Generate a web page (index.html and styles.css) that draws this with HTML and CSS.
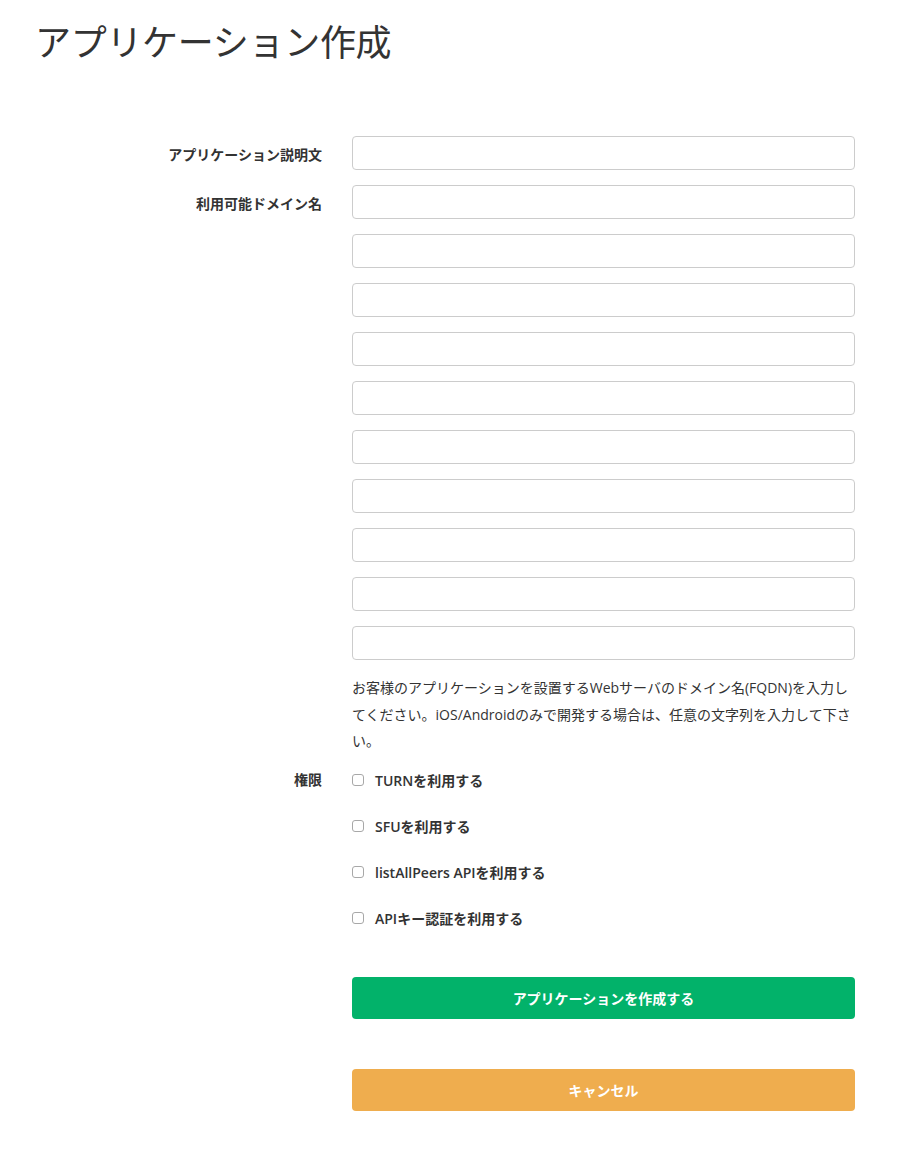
FILE: index.html
```html
<!DOCTYPE html>
<html lang="ja">
<head>
<meta charset="utf-8">
<title>アプリケーション作成</title>
<link rel="stylesheet" href="styles.css">
</head>
<body>
<div class="page">
  <h1 class="title">アプリケーション作成</h1>
  <form class="form">
    <div class="row">
      <label class="label">アプリケーション説明文</label>
      <div class="field"><input class="input" type="text"></div>
    </div>
    <div class="row">
      <label class="label">利用可能ドメイン名</label>
      <div class="field stack">
        <input class="input" type="text">
        <input class="input" type="text">
        <input class="input" type="text">
        <input class="input" type="text">
        <input class="input" type="text">
        <input class="input" type="text">
        <input class="input" type="text">
        <input class="input" type="text">
        <input class="input" type="text">
        <input class="input" type="text">
        <p class="help">お客様のアプリケーションを設置するWebサーバのドメイン名(FQDN)を入力してください。iOS/Androidのみで開発する場合は、任意の文字列を入力して下さい。</p>
      </div>
    </div>
    <div class="row perms">
      <label class="label">権限</label>
      <div class="field checks">
        <label class="check"><input type="checkbox" class="box"><span>TURNを利用する</span></label>
        <label class="check"><input type="checkbox" class="box"><span>SFUを利用する</span></label>
        <label class="check"><input type="checkbox" class="box"><span>listAllPeers APIを利用する</span></label>
        <label class="check"><input type="checkbox" class="box"><span>APIキー認証を利用する</span></label>
      </div>
    </div>
    <div class="row actions">
      <div></div>
      <div class="field buttons">
        <button type="button" class="btn btn-create">アプリケーションを作成する</button>
        <button type="button" class="btn btn-cancel">キャンセル</button>
      </div>
    </div>
  </form>
</div>
</body>
</html>
```
FILE: styles.css
```css
* { box-sizing: border-box; }
html, body { margin: 0; padding: 0; background: #fff; }
body {
  font-family: "Open Sans", "Noto Sans CJK JP", sans-serif;
  color: #333;
  font-size: 14px;
}
.page { padding: 0 0 40px 0; }
.title {
  margin: 0;
  padding: 16px 0 0 35px;
  font-size: 36px;
  font-weight: 400;
  line-height: 48px;
  letter-spacing: -0.3px;
  font-family: "Noto Sans CJK JP", sans-serif;
  color: #333;
}
.form { margin-top: 72px; }
.row {
  display: grid;
  grid-template-columns: 322px 503px;
  column-gap: 30px;
  margin-bottom: 15px;
}
.label {
  text-align: right;
  font-weight: 700;
  font-size: 14px;
  line-height: 20px;
  padding-top: 9px;
  font-family: "Open Sans", "Noto Sans CJK JP", sans-serif;
}
.stack { display: flex; flex-direction: column; gap: 15px; }
.input {
  display: block;
  width: 503px;
  height: 34px;
  border: 1px solid #ccc;
  border-radius: 4px;
  background: #fff;
  margin: 0;
  padding: 6px 12px;
  font: inherit;
}
.help {
  margin: 0;
  font-size: 14px;
  line-height: 26.5px;
  color: #333;
}
.perms { margin-top: 1px; }
.perms .label { padding-top: 0; }
.checks { display: flex; flex-direction: column; gap: 26px; }
.check {
  display: flex;
  align-items: center;
  height: 20px;
  font-weight: 600;
  font-size: 14px;
}
.box {
  width: 12px;
  height: 12px;
  margin: 1px 11px 0 0;
  appearance: none;
  -webkit-appearance: none;
  border: 1px solid #a8a8a8;
  border-radius: 3px;
  background: #fff;
  flex: none;
}
.actions { margin-top: 49px; }
.buttons { display: flex; flex-direction: column; gap: 50px; }
.btn {
  display: block;
  width: 503px;
  height: 42px;
  border: none;
  border-radius: 4px;
  color: #fff;
  font-family: "Open Sans", "Noto Sans CJK JP", sans-serif;
  font-weight: 700;
  font-size: 14px;
  cursor: pointer;
}
.btn-create { background: #02b26a; }
.btn-cancel { background: #efad4e; }
```
